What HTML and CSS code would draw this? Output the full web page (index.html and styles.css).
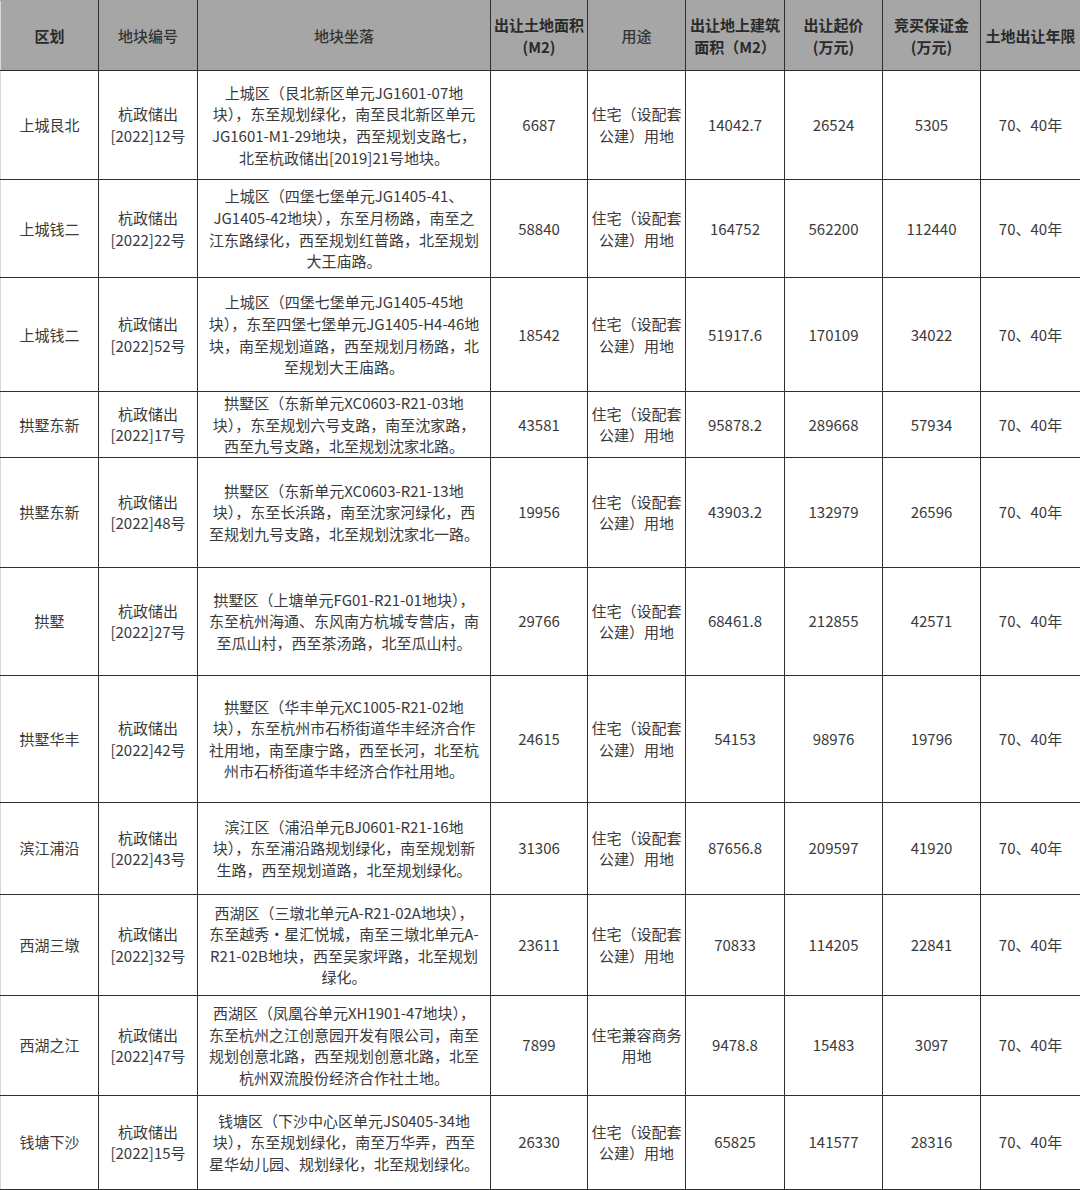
FILE: index.html
```html
<!DOCTYPE html>
<html lang="zh-CN">
<head>
<meta charset="utf-8">
<title>出让地块</title>
<link rel="stylesheet" href="styles.css">
</head>
<body>
<table class="land">
  <colgroup>
    <col class="c1"><col class="c2"><col class="c3"><col class="c4"><col class="c5"><col class="c6"><col class="c7"><col class="c8"><col class="c9">
  </colgroup>
  <thead>
    <tr class="hd">
      <th>区划</th>
      <th class="light">地块编号</th>
      <th class="light">地块坐落</th>
      <th>出让土地面积<br>(M2)</th>
      <th class="light">用途</th>
      <th>出让地上建筑<br>面积（M2）</th>
      <th>出让起价<br>(万元)</th>
      <th>竞买保证金<br>(万元)</th>
      <th>土地出让年限</th>
    </tr>
  </thead>
  <tbody>
    <tr class="r1">
      <td>上城艮北</td><td>杭政储出<br>[2022]12号</td>
      <td class="addr">上城区（艮北新区单元JG1601-07地<br>块），东至规划绿化，南至艮北新区单元<br>JG1601-M1-29地块，西至规划支路七，<br>北至杭政储出[2019]21号地块。</td>
      <td>6687</td><td class="use">住宅（设配套<br>公建）用地</td><td>14042.7</td><td>26524</td><td>5305</td><td>70、40年</td>
    </tr>
    <tr class="r2">
      <td>上城钱二</td><td>杭政储出<br>[2022]22号</td>
      <td class="addr">上城区（四堡七堡单元JG1405-41、<br>JG1405-42地块），东至月杨路，南至之<br>江东路绿化，西至规划红普路，北至规划<br>大王庙路。</td>
      <td>58840</td><td class="use">住宅（设配套<br>公建）用地</td><td>164752</td><td>562200</td><td>112440</td><td>70、40年</td>
    </tr>
    <tr class="r3">
      <td>上城钱二</td><td>杭政储出<br>[2022]52号</td>
      <td class="addr">上城区（四堡七堡单元JG1405-45地<br>块），东至四堡七堡单元JG1405-H4-46地<br>块，南至规划道路，西至规划月杨路，北<br>至规划大王庙路。</td>
      <td>18542</td><td class="use">住宅（设配套<br>公建）用地</td><td>51917.6</td><td>170109</td><td>34022</td><td>70、40年</td>
    </tr>
    <tr class="r4">
      <td>拱墅东新</td><td>杭政储出<br>[2022]17号</td>
      <td class="addr">拱墅区（东新单元XC0603-R21-03地<br>块），东至规划六号支路，南至沈家路，<br>西至九号支路，北至规划沈家北路。</td>
      <td>43581</td><td class="use">住宅（设配套<br>公建）用地</td><td>95878.2</td><td>289668</td><td>57934</td><td>70、40年</td>
    </tr>
    <tr class="r5">
      <td>拱墅东新</td><td>杭政储出<br>[2022]48号</td>
      <td class="addr">拱墅区（东新单元XC0603-R21-13地<br>块），东至长浜路，南至沈家河绿化，西<br>至规划九号支路，北至规划沈家北一路。</td>
      <td>19956</td><td class="use">住宅（设配套<br>公建）用地</td><td>43903.2</td><td>132979</td><td>26596</td><td>70、40年</td>
    </tr>
    <tr class="r6">
      <td>拱墅</td><td>杭政储出<br>[2022]27号</td>
      <td class="addr">拱墅区（上塘单元FG01-R21-01地块），<br>东至杭州海通、东风南方杭城专营店，南<br>至瓜山村，西至茶汤路，北至瓜山村。</td>
      <td>29766</td><td class="use">住宅（设配套<br>公建）用地</td><td>68461.8</td><td>212855</td><td>42571</td><td>70、40年</td>
    </tr>
    <tr class="r7">
      <td>拱墅华丰</td><td>杭政储出<br>[2022]42号</td>
      <td class="addr">拱墅区（华丰单元XC1005-R21-02地<br>块），东至杭州市石桥街道华丰经济合作<br>社用地，南至康宁路，西至长河，北至杭<br>州市石桥街道华丰经济合作社用地。</td>
      <td>24615</td><td class="use">住宅（设配套<br>公建）用地</td><td>54153</td><td>98976</td><td>19796</td><td>70、40年</td>
    </tr>
    <tr class="r8">
      <td>滨江浦沿</td><td>杭政储出<br>[2022]43号</td>
      <td class="addr">滨江区（浦沿单元BJ0601-R21-16地<br>块），东至浦沿路规划绿化，南至规划新<br>生路，西至规划道路，北至规划绿化。</td>
      <td>31306</td><td class="use">住宅（设配套<br>公建）用地</td><td>87656.8</td><td>209597</td><td>41920</td><td>70、40年</td>
    </tr>
    <tr class="r9">
      <td>西湖三墩</td><td>杭政储出<br>[2022]32号</td>
      <td class="addr">西湖区（三墩北单元A-R21-02A地块），<br>东至越秀·星汇悦城，南至三墩北单元A-<br>R21-02B地块，西至吴家坪路，北至规划<br>绿化。</td>
      <td>23611</td><td class="use">住宅（设配套<br>公建）用地</td><td>70833</td><td>114205</td><td>22841</td><td>70、40年</td>
    </tr>
    <tr class="r10">
      <td>西湖之江</td><td>杭政储出<br>[2022]47号</td>
      <td class="addr">西湖区（凤凰谷单元XH1901-47地块），<br>东至杭州之江创意园开发有限公司，南至<br>规划创意北路，西至规划创意北路，北至<br>杭州双流股份经济合作社土地。</td>
      <td>7899</td><td class="use">住宅兼容商务<br>用地</td><td>9478.8</td><td>15483</td><td>3097</td><td>70、40年</td>
    </tr>
    <tr class="r11">
      <td>钱塘下沙</td><td>杭政储出<br>[2022]15号</td>
      <td class="addr">钱塘区（下沙中心区单元JS0405-34地<br>块），东至规划绿化，南至万华弄，西至<br>星华幼儿园、规划绿化，北至规划绿化。</td>
      <td>26330</td><td class="use">住宅（设配套<br>公建）用地</td><td>65825</td><td>141577</td><td>28316</td><td>70、40年</td>
    </tr>
  </tbody>
</table>
</body>
</html>
```

FILE: styles.css
```css
html, body {
  margin: 0;
  padding: 0;
  background: #ffffff;
}

.land {
  width: 1080px;
  border-collapse: collapse;
  table-layout: fixed;
  font-family: "Microsoft YaHei", "Noto Sans CJK SC", "Noto Sans", sans-serif;
  font-size: 15px;
  line-height: 21.6px;
  color: #3a3a3a;
}

.c1 { width: 98px; }
.c2 { width: 99px; }
.c3 { width: 293px; }
.c4 { width: 97px; }
.c5 { width: 98px; }
.c6 { width: 99px; }
.c7 { width: 98px; }
.c8 { width: 98px; }
.c9 { width: 100px; }

.land th,
.land td {
  border: 1px solid #2e2e2e;
  text-align: center;
  vertical-align: middle;
  padding: 0 2px;
  white-space: nowrap;
  overflow: visible;
}

.land th {
  background: #a6a6a6;
  color: #2a2a2a;
  font-weight: 700;
  height: 69px;
}

.land th.light {
  font-weight: 500;
  color: #333333;
}

.land td.addr {
  padding: 0 2px;
}

.land tr:first-child th { border-top: 1px solid #a6a6a6; }
.land th:first-child, .land td:first-child { border-left: 1px solid #d8d8d8; }

.r1 td { height: 108px; }
.r2 td { height: 97px; }
.r3 td { height: 113px; }
.r4 td { height: 64px; }
.r5 td { height: 109px; }
.r6 td { height: 107px; }
.r7 td { height: 126px; }
.r8 td { height: 91px; }
.r9 td { height: 100px; }
.r10 td { height: 99px; }
.r11 td { height: 93px; }
```
